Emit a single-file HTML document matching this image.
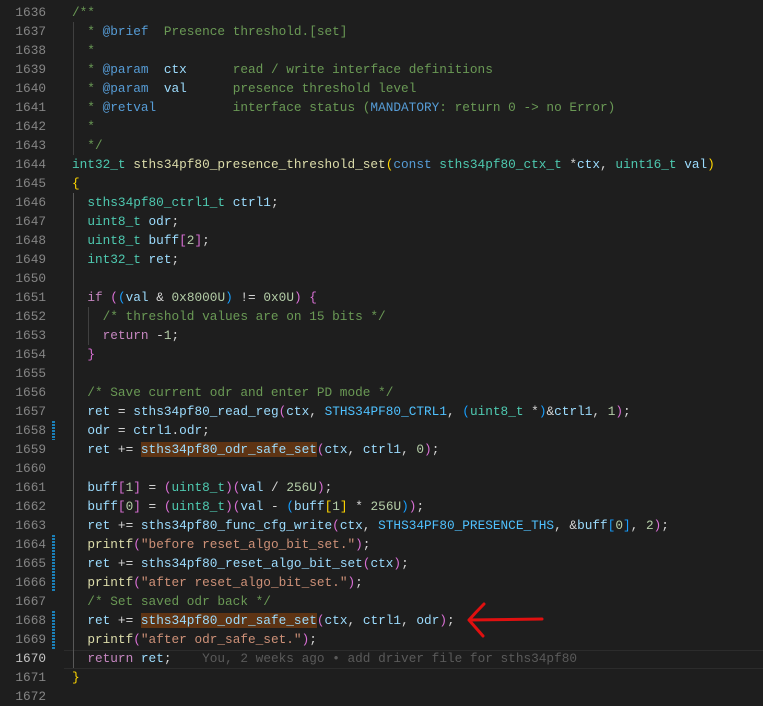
<!DOCTYPE html>
<html><head><meta charset="utf-8"><style>
body{margin:0;background:#1e1e1e;width:763px;height:702px;overflow:hidden;position:relative;font-family:"Liberation Mono",monospace;font-size:12.75px;}
.l{position:absolute;left:0;height:19px;line-height:19px;white-space:pre;width:763px}
.n{position:absolute;right:717px;color:#858585;text-align:right}
.c{position:absolute;left:72px;color:#d4d4d4}
.cm{color:#6a9955}.dk{color:#569cd6}.t{color:#4ec9b0}.v{color:#9cdcfe}.f{color:#dcdcaa}.s{color:#ce9178}.nu{color:#b5cea8}.m{color:#4fc1ff}.k{color:#c586c0}
.b1{color:#ffd700}.b2{color:#da70d6}.b3{color:#179fff}
.hl{background:#5e3414}
.g{position:absolute;width:1px;background:#404040}
.gt{position:absolute;left:52px;width:3px;background:repeating-linear-gradient(#1b80b8 0 2px,#1e1e1e 2px 3px)}
.bl{color:#5a5a5a}
</style></head><body>
<div style="position:absolute;left:64px;right:0;top:650px;height:19px;border-top:1px solid #2c2c2c;border-bottom:1px solid #2c2c2c;box-sizing:border-box"></div>
<div class="g" style="left:73px;top:22px;height:133px"></div>
<div class="g" style="left:73px;top:193px;height:475px;background:#585858"></div>
<div class="g" style="left:88px;top:307px;height:38px"></div>
<div class="gt" style="top:421px;height:19px"></div>
<div class="gt" style="top:535px;height:57px"></div>
<div class="gt" style="top:611px;height:38px"></div>

<div class="l" style="top:3px"><span class="n">1636</span><span class="c"><span class="cm">/**</span></span></div>
<div class="l" style="top:22px"><span class="n">1637</span><span class="c"><span class="cm">  * </span><span class="dk">@brief</span><span class="cm">  Presence threshold.[set]</span></span></div>
<div class="l" style="top:41px"><span class="n">1638</span><span class="c"><span class="cm">  *</span></span></div>
<div class="l" style="top:60px"><span class="n">1639</span><span class="c"><span class="cm">  * </span><span class="dk">@param</span><span class="cm">  </span><span class="v">ctx</span><span class="cm">      read / write interface definitions</span></span></div>
<div class="l" style="top:79px"><span class="n">1640</span><span class="c"><span class="cm">  * </span><span class="dk">@param</span><span class="cm">  </span><span class="v">val</span><span class="cm">      presence threshold level</span></span></div>
<div class="l" style="top:98px"><span class="n">1641</span><span class="c"><span class="cm">  * </span><span class="dk">@retval</span><span class="cm">          interface status (</span><span class="dk">MANDATORY</span><span class="cm">: return 0 -&gt; no Error)</span></span></div>
<div class="l" style="top:117px"><span class="n">1642</span><span class="c"><span class="cm">  *</span></span></div>
<div class="l" style="top:136px"><span class="n">1643</span><span class="c"><span class="cm">  */</span></span></div>
<div class="l" style="top:155px"><span class="n">1644</span><span class="c"><span class="t">int32_t</span> <span class="f">sths34pf80_presence_threshold_set</span><span class="b1">(</span><span class="dk">const</span> <span class="t">sths34pf80_ctx_t</span> *<span class="v">ctx</span>, <span class="t">uint16_t</span> <span class="v">val</span><span class="b1">)</span></span></div>
<div class="l" style="top:174px"><span class="n">1645</span><span class="c"><span class="b1">{</span></span></div>
<div class="l" style="top:193px"><span class="n">1646</span><span class="c">  <span class="t">sths34pf80_ctrl1_t</span> <span class="v">ctrl1</span>;</span></div>
<div class="l" style="top:212px"><span class="n">1647</span><span class="c">  <span class="t">uint8_t</span> <span class="v">odr</span>;</span></div>
<div class="l" style="top:231px"><span class="n">1648</span><span class="c">  <span class="t">uint8_t</span> <span class="v">buff</span><span class="b2">[</span><span class="nu">2</span><span class="b2">]</span>;</span></div>
<div class="l" style="top:250px"><span class="n">1649</span><span class="c">  <span class="t">int32_t</span> <span class="v">ret</span>;</span></div>
<div class="l" style="top:269px"><span class="n">1650</span><span class="c"></span></div>
<div class="l" style="top:288px"><span class="n">1651</span><span class="c">  <span class="k">if</span> <span class="b2">(</span><span class="b3">(</span><span class="v">val</span> &amp; <span class="nu">0x8000U</span><span class="b3">)</span> != <span class="nu">0x0U</span><span class="b2">)</span> <span class="b2">{</span></span></div>
<div class="l" style="top:307px"><span class="n">1652</span><span class="c"><span class="cm">    /* threshold values are on 15 bits */</span></span></div>
<div class="l" style="top:326px"><span class="n">1653</span><span class="c">    <span class="k">return</span> -<span class="nu">1</span>;</span></div>
<div class="l" style="top:345px"><span class="n">1654</span><span class="c">  <span class="b2">}</span></span></div>
<div class="l" style="top:364px"><span class="n">1655</span><span class="c"></span></div>
<div class="l" style="top:383px"><span class="n">1656</span><span class="c"><span class="cm">  /* Save current odr and enter PD mode */</span></span></div>
<div class="l" style="top:402px"><span class="n">1657</span><span class="c">  <span class="v">ret</span> = <span class="v">sths34pf80_read_reg</span><span class="b2">(</span><span class="v">ctx</span>, <span class="m">STHS34PF80_CTRL1</span>, <span class="b3">(</span><span class="t">uint8_t</span> *<span class="b3">)</span>&amp;<span class="v">ctrl1</span>, <span class="nu">1</span><span class="b2">)</span>;</span></div>
<div class="l" style="top:421px"><span class="n">1658</span><span class="c">  <span class="v">odr</span> = <span class="v">ctrl1</span>.<span class="v">odr</span>;</span></div>
<div class="l" style="top:440px"><span class="n">1659</span><span class="c">  <span class="v">ret</span> += <span class="v hl">sths34pf80_odr_safe_set</span><span class="b2">(</span><span class="v">ctx</span>, <span class="v">ctrl1</span>, <span class="nu">0</span><span class="b2">)</span>;</span></div>
<div class="l" style="top:459px"><span class="n">1660</span><span class="c"></span></div>
<div class="l" style="top:478px"><span class="n">1661</span><span class="c">  <span class="v">buff</span><span class="b2">[</span><span class="nu">1</span><span class="b2">]</span> = <span class="b2">(</span><span class="t">uint8_t</span><span class="b2">)(</span><span class="v">val</span> / <span class="nu">256U</span><span class="b2">)</span>;</span></div>
<div class="l" style="top:497px"><span class="n">1662</span><span class="c">  <span class="v">buff</span><span class="b2">[</span><span class="nu">0</span><span class="b2">]</span> = <span class="b2">(</span><span class="t">uint8_t</span><span class="b2">)(</span><span class="v">val</span> - <span class="b3">(</span><span class="v">buff</span><span class="b1">[</span><span class="nu">1</span><span class="b1">]</span> * <span class="nu">256U</span><span class="b3">)</span><span class="b2">)</span>;</span></div>
<div class="l" style="top:516px"><span class="n">1663</span><span class="c">  <span class="v">ret</span> += <span class="v">sths34pf80_func_cfg_write</span><span class="b2">(</span><span class="v">ctx</span>, <span class="m">STHS34PF80_PRESENCE_THS</span>, &amp;<span class="v">buff</span><span class="b3">[</span><span class="nu">0</span><span class="b3">]</span>, <span class="nu">2</span><span class="b2">)</span>;</span></div>
<div class="l" style="top:535px"><span class="n">1664</span><span class="c">  <span class="f">printf</span><span class="b2">(</span><span class="s">"before reset_algo_bit_set."</span><span class="b2">)</span>;</span></div>
<div class="l" style="top:554px"><span class="n">1665</span><span class="c">  <span class="v">ret</span> += <span class="v">sths34pf80_reset_algo_bit_set</span><span class="b2">(</span><span class="v">ctx</span><span class="b2">)</span>;</span></div>
<div class="l" style="top:573px"><span class="n">1666</span><span class="c">  <span class="f">printf</span><span class="b2">(</span><span class="s">"after reset_algo_bit_set."</span><span class="b2">)</span>;</span></div>
<div class="l" style="top:592px"><span class="n">1667</span><span class="c"><span class="cm">  /* Set saved odr back */</span></span></div>
<div class="l" style="top:611px"><span class="n">1668</span><span class="c">  <span class="v">ret</span> += <span class="v hl">sths34pf80_odr_safe_set</span><span class="b2">(</span><span class="v">ctx</span>, <span class="v">ctrl1</span>, <span class="v">odr</span><span class="b2">)</span>;</span></div>
<div class="l" style="top:630px"><span class="n">1669</span><span class="c">  <span class="f">printf</span><span class="b2">(</span><span class="s">"after odr_safe_set."</span><span class="b2">)</span>;</span></div>
<div class="l" style="top:649px"><span class="n" style="color:#c6c6c6">1670</span><span class="c">  <span class="k">return</span> <span class="v">ret</span>;    <span class="bl">You, 2 weeks ago • add driver file for sths34pf80</span></span></div>
<div class="l" style="top:668px"><span class="n">1671</span><span class="c"><span class="b1">}</span></span></div>
<div class="l" style="top:687px"><span class="n">1672</span><span class="c"></span></div>

<svg style="position:absolute;left:0;top:0" width="763" height="702"><path d="M469 620 L542 619 M484 604 Q476 612 469 620 Q476 628 483 636" stroke="#e01010" stroke-width="3" fill="none" stroke-linecap="round" stroke-linejoin="round"/></svg>
</body></html>
